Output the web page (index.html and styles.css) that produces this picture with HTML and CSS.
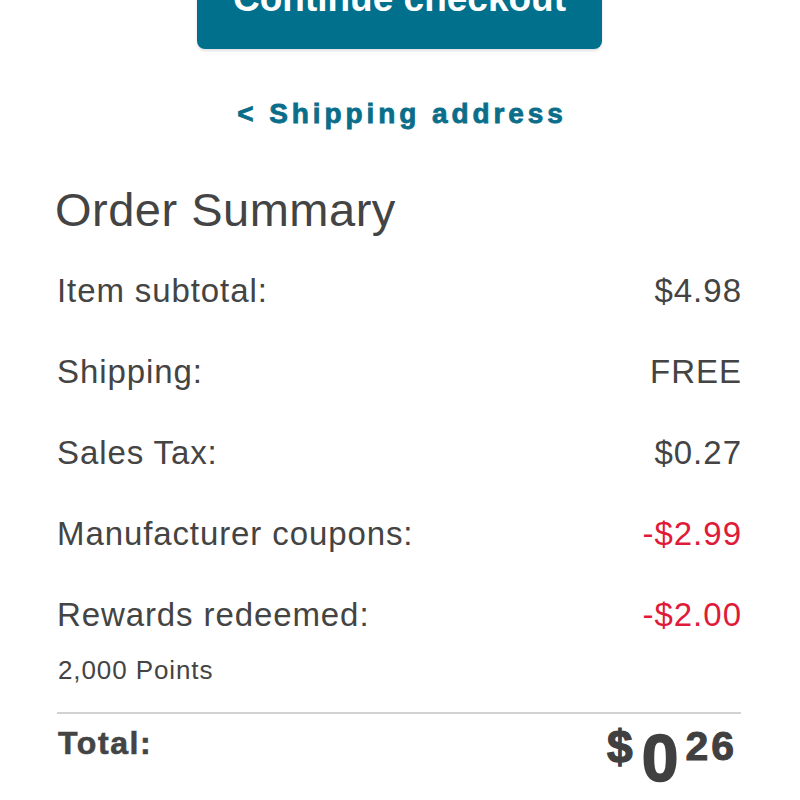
FILE: index.html
```html
<!DOCTYPE html>
<html lang="en">
<head>
<meta charset="utf-8">
<title>Order Summary</title>
<link rel="stylesheet" href="styles.css">
</head>
<body>
<div class="page">
  <button class="btn" type="button">Continue checkout</button>
  <a class="back" href="#">&lt; Shipping address</a>
  <section class="summary">
    <h2 class="title">Order Summary</h2>
    <div class="row"><span class="label">Item subtotal:</span><span class="value">$4.98</span></div>
    <div class="row"><span class="label">Shipping:</span><span class="value">FREE</span></div>
    <div class="row"><span class="label">Sales Tax:</span><span class="value">$0.27</span></div>
    <div class="row"><span class="label">Manufacturer coupons:</span><span class="value red">-$2.99</span></div>
    <div class="row"><span class="label">Rewards redeemed:</span><span class="value red">-$2.00</span></div>
    <div class="points">2,000 Points</div>
    <div class="total">
      <span class="total-label">Total:</span>
      <span class="price"><span class="cur">$</span><span class="dollars">0</span><span class="cents">26</span></span>
    </div>
  </section>
</div>
</body>
</html>
```

FILE: styles.css
```css
* { box-sizing: border-box; }
html, body { margin: 0; padding: 0; background: #ffffff; }
body {
  font-family: "Liberation Sans", Arial, Helvetica, sans-serif;
  color: #444444;
  overflow: hidden;
}
.page {
  width: 800px;
  display: flex;
  flex-direction: column;
}
.btn {
  display: block;
  width: 405px;
  height: 70px;
  margin: -21px 0 0 197px;
  padding: 0 0 30px;
  border: 0;
  border-radius: 8px;
  background: #00708c;
  color: #ffffff;
  font-family: "Liberation Sans", Arial, sans-serif;
  font-weight: bold;
  font-size: 37px;
  line-height: 40px;
  text-align: center;
  box-shadow: 0 2px 3px rgba(0,0,0,0.12);
}
.back {
  display: block;
  margin-top: 50px;
  text-align: center;
  color: #0a6e8a;
  text-decoration: none;
  font-weight: bold;
  font-size: 28px;
  line-height: 30px;
  letter-spacing: 3.9px;
  padding-left: 4px;
  -webkit-text-stroke: 0.8px #0a6e8a;
}
.summary {
  display: flex;
  flex-direction: column;
  padding: 0 59px 0 57px;
}
.title {
  margin: 53px 0 0 -2px;
  font-weight: normal;
  font-size: 47px;
  line-height: 56px;
  letter-spacing: 0.5px;
  color: #444444;
}
.row {
  display: flex;
  justify-content: space-between;
  align-items: baseline;
  height: 81px;
  font-size: 33px;
  line-height: 81px;
  letter-spacing: 0.9px;
}
.title + .row { margin-top: 12px; }
.value { letter-spacing: 1px; margin-right: -1px; }
.red { color: #e01b3a; }
.points {
  font-size: 26px;
  line-height: 30px;
  letter-spacing: 0.9px;
  padding-left: 1px;
  padding-bottom: 27px;
  border-bottom: 2px solid #d2d2d2;
}
.total {
  display: flex;
  justify-content: space-between;
  align-items: flex-start;
  padding-top: 13px;
  padding-left: 1px;
}
.total-label {
  font-weight: bold;
  font-size: 32px;
  line-height: 32px;
  letter-spacing: 1.6px;
  -webkit-text-stroke: 0.6px #444444;
}
.price {
  display: flex;
  align-items: flex-start;
  font-weight: bold;
  color: #404040;
  margin-right: 4px;
}
.cur { font-size: 46px; line-height: 46px; margin-top: -3px; margin-right: 9px; -webkit-text-stroke: 1.3px #404040; }
.dollars { font-size: 66px; line-height: 66px; margin-top: -2px; margin-right: 7px; -webkit-text-stroke: 1.6px #404040; }
.cents { font-size: 41px; line-height: 41px; margin-top: -1px; letter-spacing: 3px; -webkit-text-stroke: 1px #404040; }
```
